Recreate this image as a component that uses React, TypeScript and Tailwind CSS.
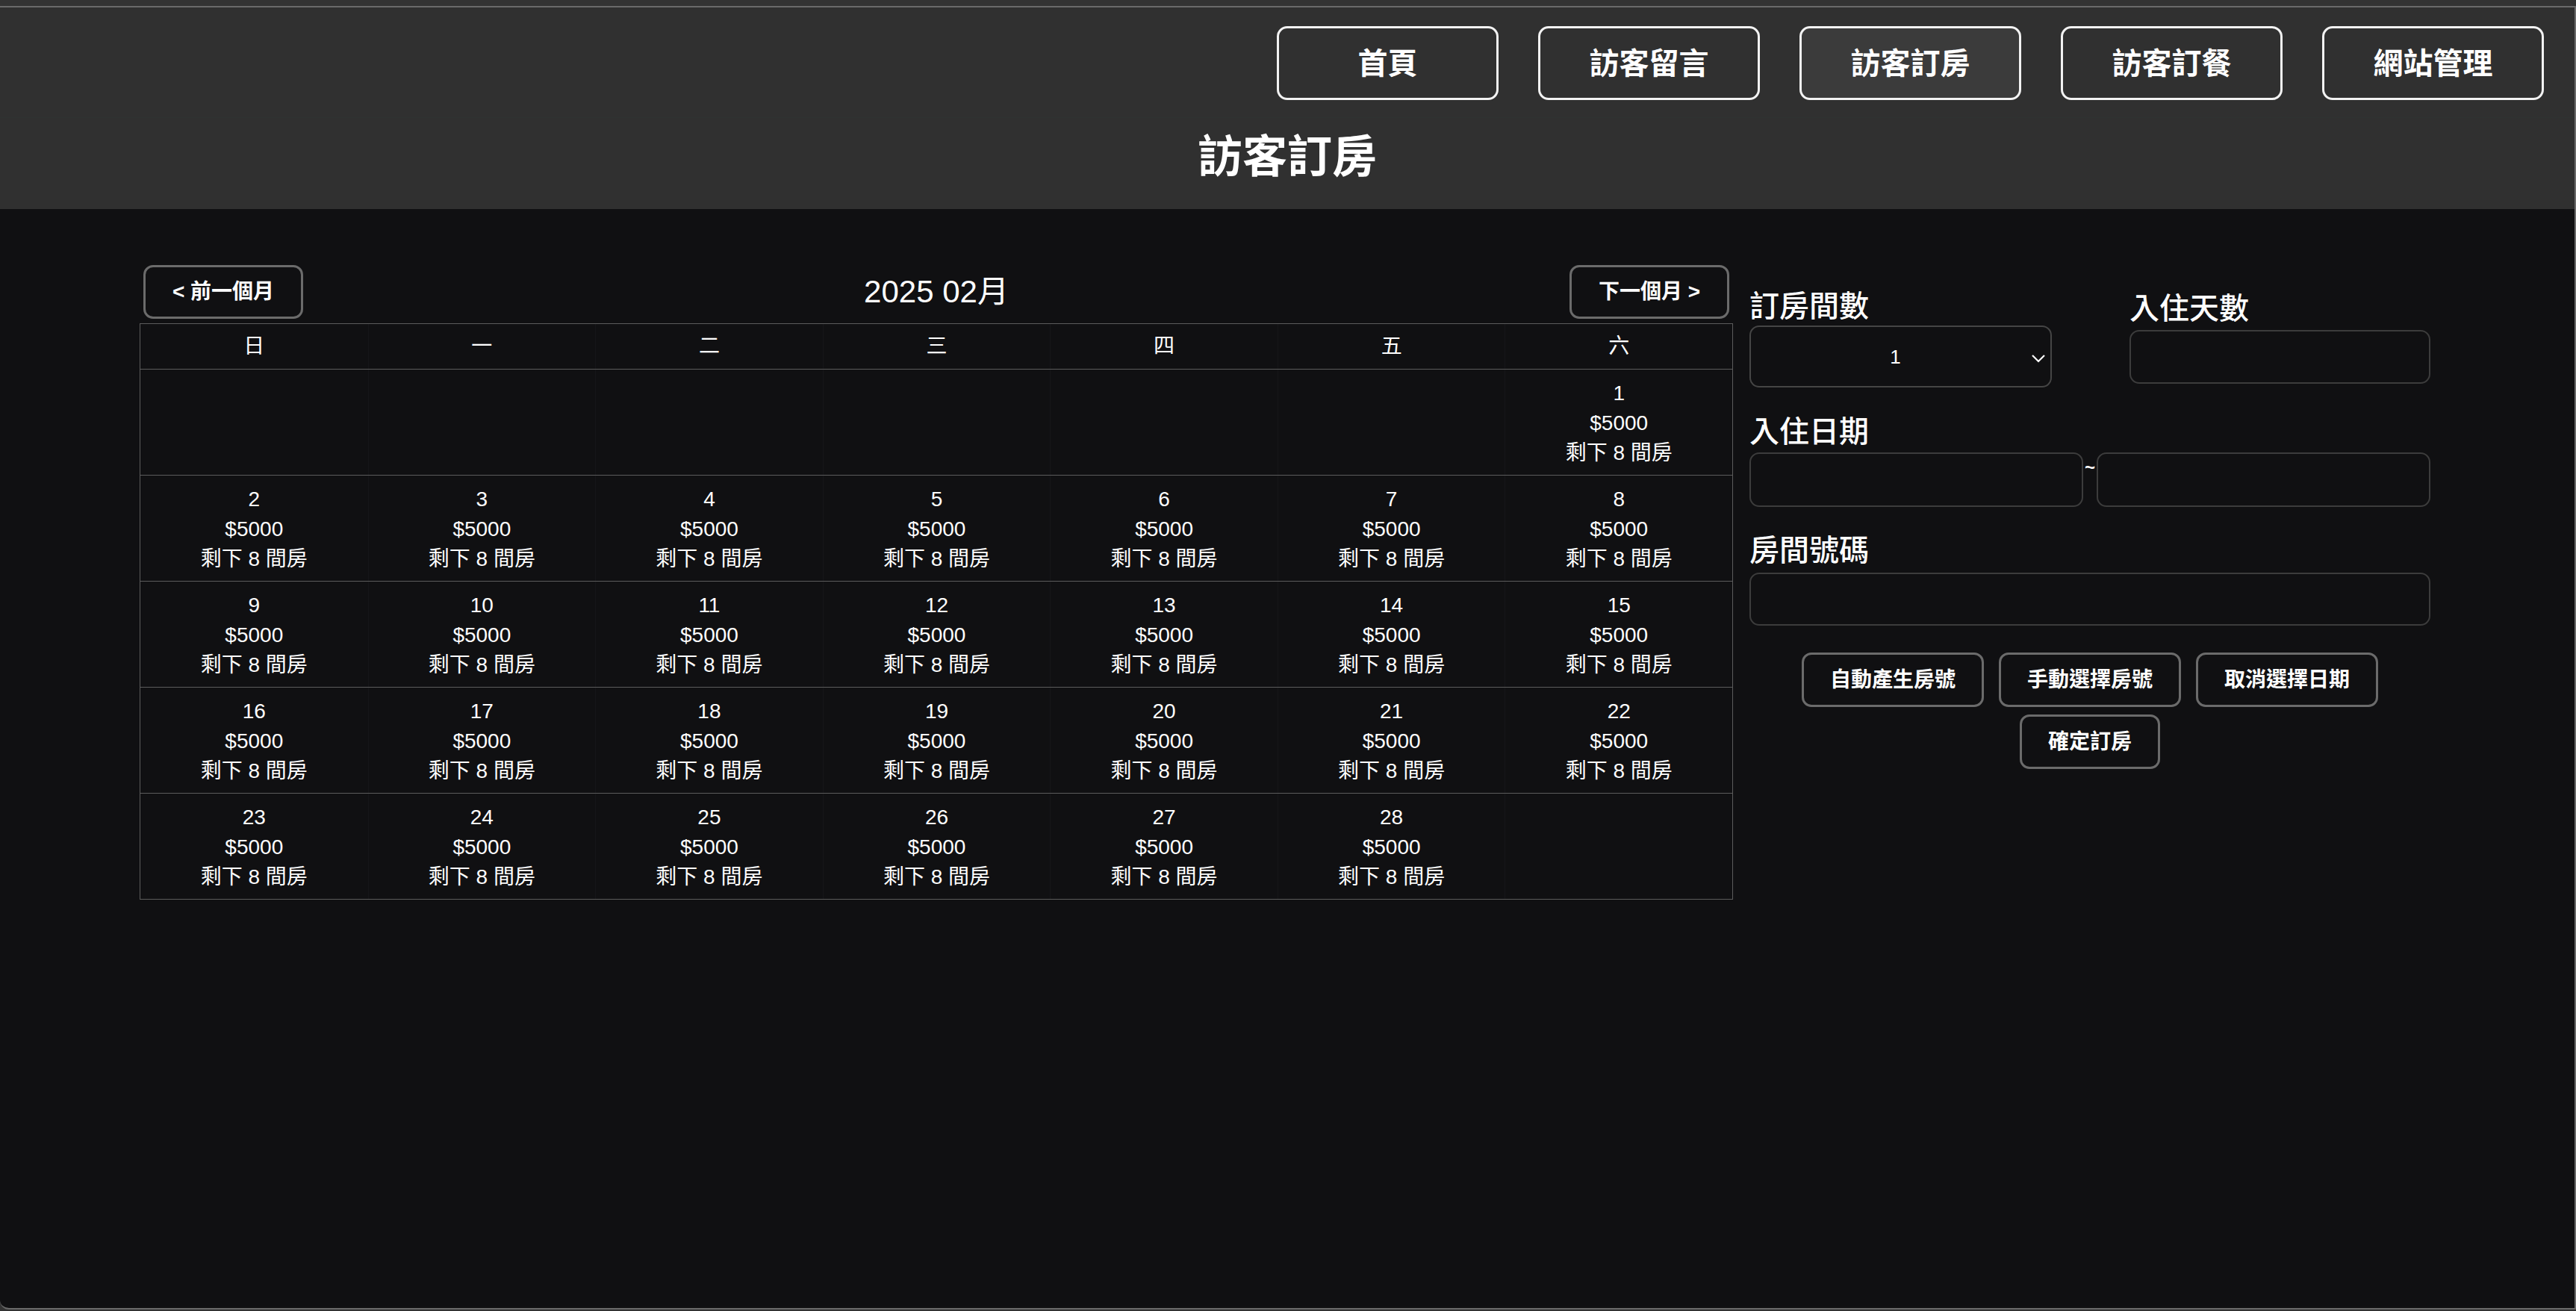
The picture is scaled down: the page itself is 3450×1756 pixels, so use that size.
import React from "react";

const NAVS = ["首頁", "訪客留言", "訪客訂房", "訪客訂餐", "網站管理"];
const DAYS = ["日", "一", "二", "三", "四", "五", "六"];

function buildWeeks(): (number | null)[][] {
  const cells: (number | null)[] = [];
  for (let i = 0; i < 6; i++) cells.push(null);
  for (let d = 1; d <= 28; d++) cells.push(d);
  while (cells.length % 7 !== 0) cells.push(null);
  const weeks: (number | null)[][] = [];
  for (let i = 0; i < cells.length; i += 7) weeks.push(cells.slice(i, i + 7));
  return weeks;
}

function NavButton({ label, active }: { label: string; active?: boolean }) {
  return (
    <div
      className={`w-[297px] h-[99px] flex items-center justify-center border-[3px] border-[#f2f2f2] rounded-[14px] text-[40px] leading-none font-bold text-white ${
        active ? "bg-[#3b3b3b]" : "bg-[#303030]"
      }`}
    >
      {label}
    </div>
  );
}

function ActionButton({ label }: { label: string }) {
  return (
    <div className="h-[73px] px-[35px] flex items-center justify-center border-[3px] border-[#6b6b6b] rounded-[13px] text-[28px] leading-none font-bold text-white">
      {label}
    </div>
  );
}

export default function App() {
  const weeks = buildWeeks();
  return (
    <div className="w-[3450px] h-[1756px] bg-[#333333] pt-[8px] overflow-hidden text-white font-['Liberation_Sans','Noto_Sans_CJK_TC',sans-serif]">
      <div className="h-[1746px] border-t-2 border-r-2 border-b-2 border-[#6a6a6a] rounded-bl-[12px] bg-[#101012] flex flex-col overflow-hidden">
        {/* nav */}
        <div className="h-[148px] shrink-0 bg-[#303030] border-b border-[#2e3331] flex justify-end items-start pt-[25px] pr-[41px] gap-[53px]">
          {NAVS.map((n) => (
            <NavButton key={n} label={n} active={n === "訪客訂房"} />
          ))}
        </div>
        {/* title */}
        <div className="h-[122px] shrink-0 bg-[#303030] flex justify-center pt-[17px]">
          <h1 className="text-[60px] leading-[72px] font-bold text-white">訪客訂房</h1>
        </div>
        {/* body */}
        <div className="flex items-start pl-[187px] pt-[75px] gap-[22px]">
          {/* calendar */}
          <div className="w-[2134px] shrink-0">
            <div className="h-[72px] px-[5px] mb-[6px] flex items-center justify-between">
              <div className="w-[214px] h-[72px] flex items-center justify-center border-[3px] border-[#6b6b6b] rounded-[13px] text-[28px] leading-none font-bold">
                &lt; 前一個月
              </div>
              <div className="text-[42px] leading-none">2025 02月</div>
              <div className="w-[214px] h-[72px] flex items-center justify-center border-[3px] border-[#6b6b6b] rounded-[13px] text-[28px] leading-none font-bold">
                下一個月 &gt;
              </div>
            </div>
            <div className="border border-[#5c5c5c]">
              <div className="grid grid-cols-7 border-b border-[#5c5c5c]">
                {DAYS.map((d, i) => (
                  <div
                    key={d}
                    className={`h-[60px] flex items-center justify-center text-[28px] leading-[40px] ${
                      i > 0 ? "border-l border-[#161619]" : ""
                    }`}
                  >
                    {d}
                  </div>
                ))}
              </div>
              {weeks.map((w, wi) => (
                <div
                  key={wi}
                  className={`grid grid-cols-7 ${wi < weeks.length - 1 ? "border-b border-[#5c5c5c]" : ""}`}
                >
                  {w.map((d, di) => (
                    <div
                      key={di}
                      className={`h-[141px] pt-[12px] flex flex-col items-center text-[28px] leading-[40px] ${
                        di > 0 ? "border-l border-[#161619]" : ""
                      }`}
                    >
                      {d !== null && (
                        <>
                          <div>{d}</div>
                          <div>$5000</div>
                          <div>剩下 8 間房</div>
                        </>
                      )}
                    </div>
                  ))}
                </div>
              ))}
            </div>
          </div>

          {/* right panel */}
          <div className="w-[912px] shrink-0 mt-[31px]">
            <div className="flex justify-between">
              <div className="w-[405px]">
                <div className="text-[40px] leading-[48px] font-medium">訂房間數</div>
                <div className="mt-[2px] h-[83px] border-2 border-[#454545] rounded-[13px] flex items-center relative">
                  <div className="flex-1 text-center text-[26px] leading-none pr-[14px]">1</div>
                  <svg
                    className="absolute right-[6px] top-[36px]"
                    width="20"
                    height="12"
                    viewBox="0 0 20 12"
                    fill="none"
                  >
                    <path d="M2 2 L10 10 L18 2" stroke="#ffffff" strokeWidth="2.2" />
                  </svg>
                </div>
              </div>
              <div className="w-[403px] pt-[3px]">
                <div className="text-[40px] leading-[48px] font-medium">入住天數</div>
                <div className="mt-[5px] h-[72px] border-2 border-[#3c3c3c] rounded-[13px]" />
              </div>
            </div>

            <div className="mt-[35px] text-[40px] leading-[48px] font-medium">入住日期</div>
            <div className="mt-[4px] flex items-start">
              <div className="w-[447px] h-[73px] border-2 border-[#3c3c3c] rounded-[13px]" />
              <div className="w-[18px] text-center text-[24px] leading-none mt-[8px] font-bold">~</div>
              <div className="w-[447px] h-[73px] border-2 border-[#3c3c3c] rounded-[13px]" />
            </div>

            <div className="mt-[34px] text-[40px] leading-[48px] font-medium">房間號碼</div>
            <div className="mt-[6px] h-[71px] border-2 border-[#3c3c3c] rounded-[13px]" />

            <div className="mt-[36px] flex flex-wrap justify-center gap-x-[20px] gap-y-[10px]">
              <ActionButton label="自動產生房號" />
              <ActionButton label="手動選擇房號" />
              <ActionButton label="取消選擇日期" />
              <ActionButton label="確定訂房" />
            </div>
          </div>
        </div>
      </div>
    </div>
  );
}
